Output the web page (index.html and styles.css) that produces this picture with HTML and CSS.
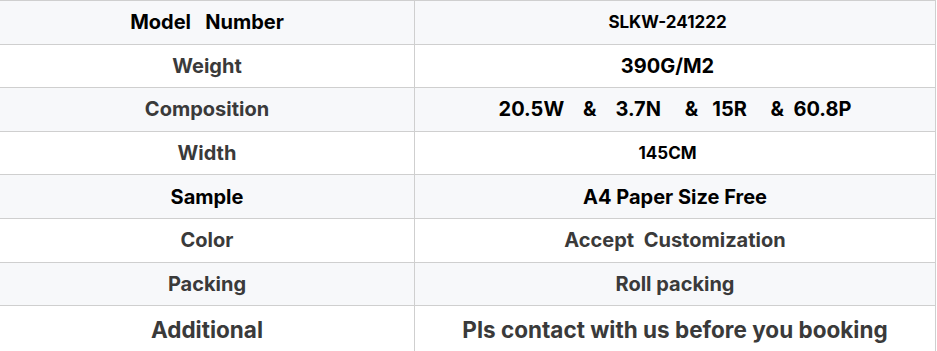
FILE: index.html
```html
<!DOCTYPE html>
<html>
<head>
<meta charset="utf-8">
<link rel="stylesheet" href="styles.css">
</head>
<body>
<table class="spec">
  <tr class="alt">
    <td class="key dark">Model&nbsp;&nbsp; Number</td>
    <td class="val dark small"><span class="shift">SLKW-241222</span></td>
  </tr>
  <tr>
    <td class="key">Weight</td>
    <td class="val dark"><span class="shift">390G/M2</span></td>
  </tr>
  <tr class="alt">
    <td class="key">Composition</td>
    <td class="val dark pre">20.5W    &amp;    3.7N     &amp;   15R     &amp;  60.8P</td>
  </tr>
  <tr>
    <td class="key">Width</td>
    <td class="val dark small"><span class="shift">145CM</span></td>
  </tr>
  <tr class="alt">
    <td class="key dark">Sample</td>
    <td class="val dark">A4 Paper Size Free</td>
  </tr>
  <tr>
    <td class="key">Color</td>
    <td class="val">Accept&nbsp; Customization</td>
  </tr>
  <tr class="alt">
    <td class="key">Packing</td>
    <td class="val">Roll packing</td>
  </tr>
  <tr class="last">
    <td class="key big">Additional</td>
    <td class="val big">Pls contact with us before you booking</td>
  </tr>
</table>
</body>
</html>
```
FILE: styles.css
```css
html, body {
  margin: 0;
  padding: 0;
  background: #ffffff;
}
.spec {
  border-collapse: collapse;
  width: 936px;
  table-layout: fixed;
  font-family: Inter, "Noto Sans", sans-serif;
  font-weight: 700;
  font-size: 20px;
  color: #3a3a3a;
}
.spec td {
  height: 42.6px;
  padding: 0;
  text-align: center;
  vertical-align: middle;
  border: 1px solid #cfcfcf;
}
.spec td.key {
  width: 414px;
  border-left: none;
}
.spec tr.alt td {
  background: #f7f8fa;
}
.spec tr.last td {
  height: 46px;
}
.dark {
  color: #000000;
}
.small {
  font-size: 17px;
}
.big {
  font-size: 22.5px;
}
.pre {
  white-space: pre;
}
.shift {
  padding-right: 15px;
}
```
